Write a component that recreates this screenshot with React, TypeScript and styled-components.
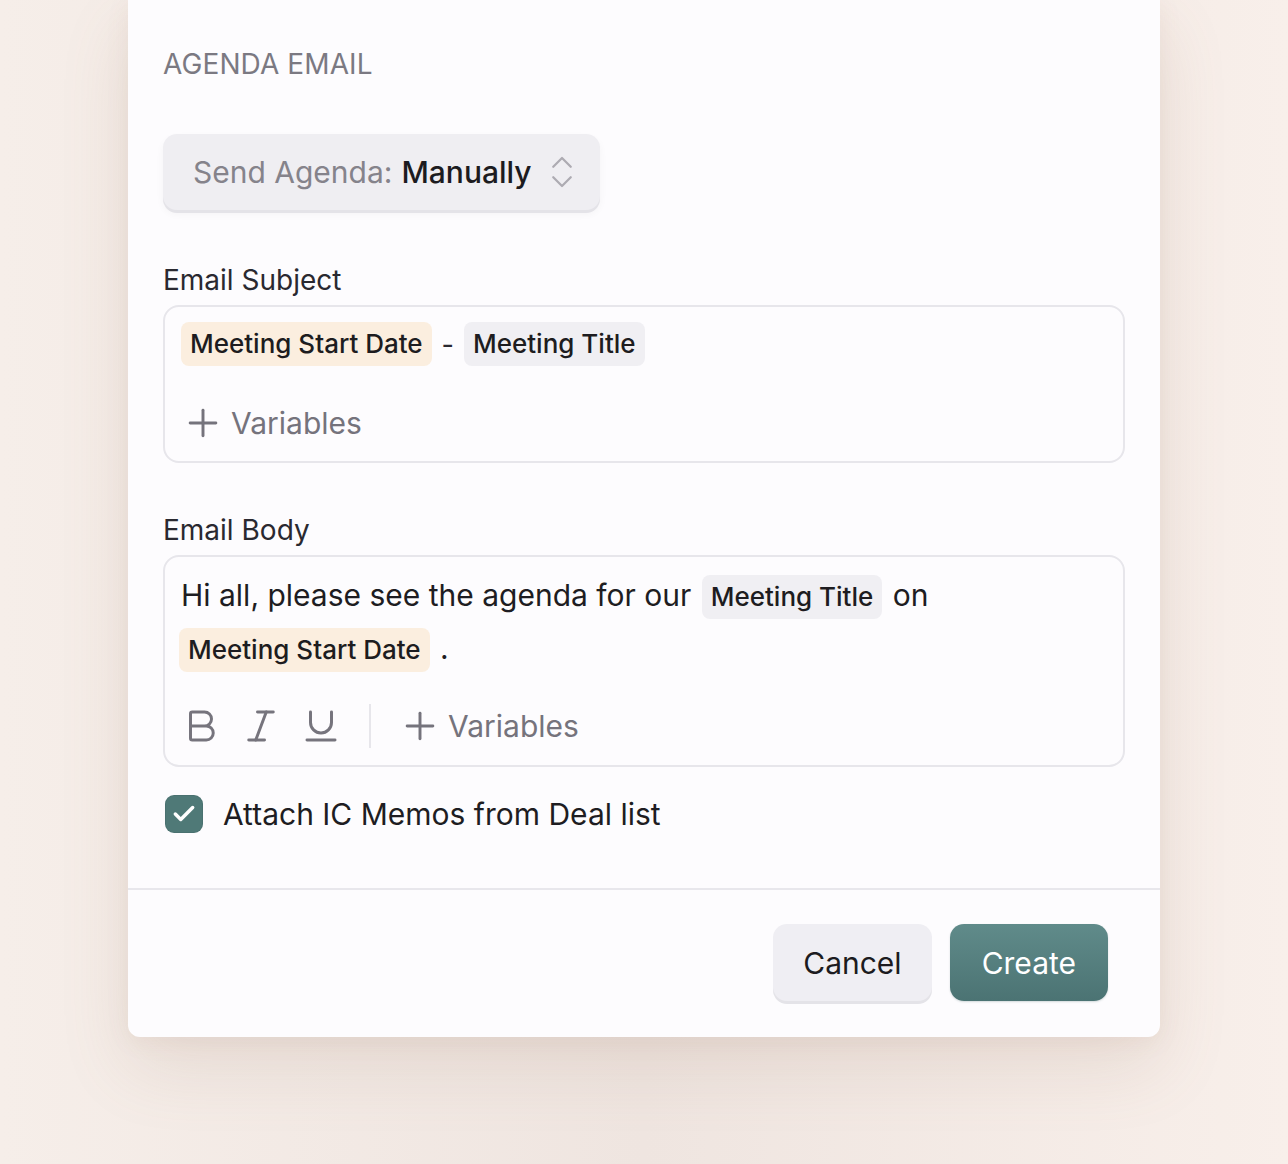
import styled, { createGlobalStyle } from "styled-components"
import { Bold, Italic, Underline, Plus, ChevronsUpDown, Check } from "lucide-react"

const GlobalStyle = createGlobalStyle`
	html, body {
		margin: 0;
		padding: 0;
	}
	body {
		font-family: Inter, "Noto Sans", "Liberation Sans", sans-serif;
		-webkit-font-smoothing: antialiased;
	}
`

const App = () => {
	return (
		<Page>
			<GlobalStyle />
			<Card>
				<Body>
					<SectionTitle>AGENDA EMAIL</SectionTitle>
					<SelectButton type="button">
						<SelectLabel>Send Agenda:</SelectLabel>
						<SelectValue>Manually</SelectValue>
						<ChevronsUpDown size={42} strokeWidth={1.3} color="#adabb2" />
					</SelectButton>

					<Field>
						<FieldLabel>Email Subject</FieldLabel>
						<InputBox>
							<ChipRow>
								<Chip $tone="date">Meeting Start Date</Chip>
								<Dash>-</Dash>
								<Chip $tone="title">Meeting Title</Chip>
							</ChipRow>
							<VariablesButton type="button">
								<Plus size={44} strokeWidth={1.6} />
								Variables
							</VariablesButton>
						</InputBox>
					</Field>

					<Field>
						<FieldLabel>Email Body</FieldLabel>
						<InputBox $body>
							<BodyText>
								Hi all, please see the agenda for our <Chip $tone="title">Meeting Title</Chip> on{" "}
								<Chip $tone="date">Meeting Start Date</Chip> .
							</BodyText>
							<Toolbar>
								<ToolIcon>
									<Bold size={42} strokeWidth={1.7} />
								</ToolIcon>
								<ToolIcon>
									<Italic size={42} strokeWidth={1.7} />
								</ToolIcon>
								<ToolIcon>
									<Underline size={42} strokeWidth={1.7} />
								</ToolIcon>
								<ToolDivider />
								<VariablesButton type="button">
									<Plus size={44} strokeWidth={1.6} />
									Variables
								</VariablesButton>
							</Toolbar>
						</InputBox>
					</Field>

					<CheckRow>
						<CheckBox>
							<Check size={26} strokeWidth={3.2} color="#ffffff" />
						</CheckBox>
						<CheckLabel>Attach IC Memos from Deal list</CheckLabel>
					</CheckRow>
				</Body>
				<Footer>
					<Button type="button">Cancel</Button>
					<Button type="button" $primary>
						Create
					</Button>
				</Footer>
			</Card>
		</Page>
	)
}

export default App

const Page = styled.div`
	min-height: 1164px;
	display: flex;
	justify-content: center;
	align-items: flex-start;
	background: linear-gradient(90deg, #f6eee9 0%, #efe5e0 50%, #f8efea 100%);
`

const Card = styled.div`
	width: 1032px;
	background: #fdfcfe;
	border-radius: 0 0 12px 12px;
	box-shadow: 0 30px 70px rgba(150, 110, 90, 0.14), 0 4px 24px rgba(150, 110, 90, 0.08);
`

const Body = styled.div`
	display: flex;
	flex-direction: column;
	padding: 46px 35px 55px;
`

const SectionTitle = styled.h2`
	margin: 0;
	font-size: 28px;
	line-height: 36px;
	font-weight: 400;
	letter-spacing: 0.1px;
	color: #7b7982;
`

const SelectButton = styled.button`
	align-self: flex-start;
	margin-top: 52px;
	display: inline-flex;
	align-items: center;
	gap: 9px;
	height: 76px;
	padding: 0 17px 0 30px;
	border: none;
	border-radius: 14px;
	background: #efeef2;
	box-shadow: 0 3px 0 #e4e3e8, 0 4px 8px rgba(0, 0, 0, 0.04);
	font-family: inherit;
	font-size: 30px;
	cursor: pointer;
`

const SelectLabel = styled.span`
	color: #85838b;
`

const SelectValue = styled.span`
	color: #1c1b20;
	font-weight: 500;
`

const Field = styled.div`
	display: flex;
	flex-direction: column;
	margin-top: 52px;
	gap: 7px;

	& + & {
		margin-top: 49px;
	}
`

const FieldLabel = styled.label`
	font-size: 28px;
	line-height: 36px;
	color: #2a2930;
`

const InputBox = styled.div<{ $body?: boolean }>`
	display: flex;
	flex-direction: column;
	border: 2px solid #e7e6eb;
	border-radius: 16px;
	background: #fdfcfe;
	padding: ${(p) => (p.$body ? "12px 16px 15px" : "15px 16px 14px")};
	gap: ${(p) => (p.$body ? "27px" : "33px")};
`

const ChipRow = styled.div`
	display: flex;
	align-items: center;
	gap: 10px;
`

const Chip = styled.span<{ $tone: "date" | "title" }>`
	display: inline-block;
	padding: 0 9px;
	line-height: 44px;
	border-radius: 8px;
	font-size: 26px;
	font-weight: 500;
	color: #1d1c20;
	background: ${(p) => (p.$tone === "date" ? "#fbeedf" : "#f0eff3")};
`

const Dash = styled.span`
	font-size: 27px;
	color: #2a2930;
`

const VariablesButton = styled.button`
	align-self: flex-start;
	display: inline-flex;
	align-items: center;
	gap: 6px;
	height: 48px;
	padding: 0;
	border: none;
	background: transparent;
	font-family: inherit;
	font-size: 30px;
	line-height: 40px;
	color: #75737c;
	cursor: pointer;
`

const BodyText = styled.p`
	margin: 0;
	font-size: 30px;
	line-height: 53px;
	color: #1e1d22;

	${Chip} {
		margin: 0 2px;
	}
	${Chip}:last-child {
		margin-left: -2px;
	}
`

const Toolbar = styled.div`
	display: flex;
	align-items: center;
	height: 48px;

	${VariablesButton} {
		margin-left: 27px;
	}
`

const ToolIcon = styled.span`
	display: inline-flex;
	align-items: center;
	justify-content: center;
	width: 42px;
	height: 42px;
	margin-right: 18px;
	color: #76747d;

	&:first-child {
		margin-left: -1px;
	}
`

const ToolDivider = styled.span`
	width: 2px;
	height: 44px;
	background: #e7e6eb;
	margin-left: 9px;
`

const CheckRow = styled.label`
	display: flex;
	align-items: center;
	gap: 20px;
	margin-top: 28px;
	padding-left: 2px;
`

const CheckBox = styled.span`
	display: inline-flex;
	align-items: center;
	justify-content: center;
	width: 38px;
	height: 38px;
	border-radius: 9px;
	background: #4f7977;
	box-shadow: inset 0 0 0 1px rgba(0, 0, 0, 0.06);
`

const CheckLabel = styled.span`
	font-size: 30px;
	color: #1e1d22;
`

const Footer = styled.div`
	display: flex;
	justify-content: flex-end;
	gap: 18px;
	padding: 34px 52px 36px;
	border-top: 2px solid #e8e7ec;
`

const Button = styled.button<{ $primary?: boolean }>`
	height: 77px;
	padding: 0 ${(p) => (p.$primary ? "32px" : "30px")};
	border: none;
	border-radius: 14px;
	font-family: inherit;
	font-size: 30px;
	cursor: pointer;
	color: ${(p) => (p.$primary ? "#ffffff" : "#1c1b20")};
	background: ${(p) =>
		p.$primary ? "linear-gradient(180deg, #608b8a 0%, #4b7373 100%)" : "#efeef3"};
	box-shadow: ${(p) =>
		p.$primary ? "0 1px 2px rgba(40, 80, 80, 0.2)" : "0 3px 0 #e4e3e8"};
`
